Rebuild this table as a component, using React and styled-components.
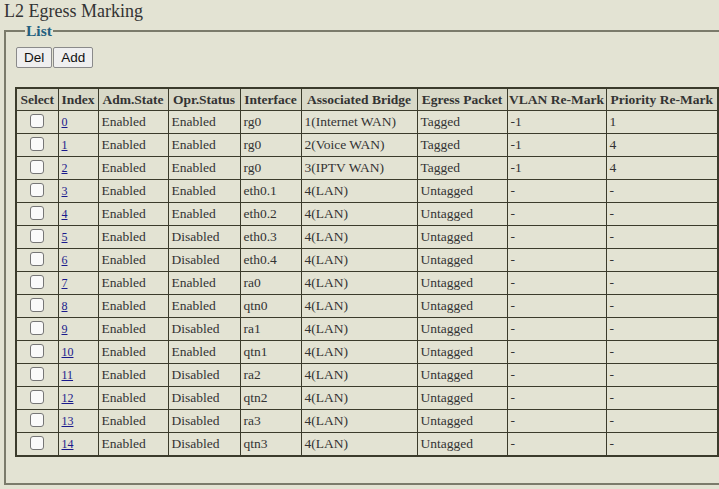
import React from 'react';
import styled, { createGlobalStyle } from 'styled-components';

const GlobalStyle = createGlobalStyle`
  html, body {
    margin: 0;
    padding: 0;
    background: #e3e3d3;
    overflow: hidden;
  }
  body {
    font-family: "Liberation Serif", "Times New Roman", serif;
    color: #333;
  }
`;

// Page wrapper
const Page = styled.div`
  width: 740px;
  padding: 1px 0 0 4px;
`;

const PageTitle = styled.h1`
  margin: 0 0 3px;
  font-size: 18px;
  font-weight: normal;
  line-height: 20px;
  color: #333;
`;

const Box = styled.fieldset`
  margin: 0;
  padding: 9px 0 26px 8px;
  border: 2px solid #7b7b6b;
  border-right: none;
  width: 730px;
  box-sizing: border-box;
`;

const Legend = styled.legend`
  margin-left: 11px;
  padding: 0 1px;
  font-size: 15.5px;
  font-weight: bold;
  color: #23607f;
  line-height: 14px;
`;

const Toolbar = styled.div`
  display: flex;
  gap: 1px;
  margin-left: 2px;
  margin-bottom: 19px;
`;

const Button = styled.button`
  font-family: "Liberation Sans", Arial, sans-serif;
  font-size: 13.5px;
  height: 21px;
  padding: 0 7px;
  background: #efefef;
  color: #111;
  border: 1px solid #8a8a8a;
  border-radius: 2px;
`;

const Table = styled.table`
  border-collapse: collapse;
  table-layout: fixed;
  width: 702px;
  margin-left: 1px;
  border: 2px solid #3b3b2b;
`;

const Th = styled.th`
  background: #d9d9c8;
  border: 1px solid #3b3b2b;
  font-size: 13.5px;
  font-weight: bold;
  color: #333;
  height: 21px;
  padding: 0;
  text-align: center;
  white-space: nowrap;
  overflow: hidden;
`;

const Td = styled.td`
  border: 1px solid #3b3b2b;
  font-size: 13.5px;
  color: #333;
  height: 22px;
  padding: 0 3px;
  text-align: ${(p) => (p.$center ? 'center' : 'left')};
  white-space: nowrap;
  vertical-align: middle;
`;

const Check = styled.span`
  display: inline-block;
  width: 12px;
  height: 12px;
  border: 1px solid #767676;
  border-radius: 3px;
  background: #fafafa;
  vertical-align: middle;
  margin-top: -4px;
`;

const IndexLink = styled.a`
  color: #1a1a8c;
  text-decoration: underline;
  font-size: 12px;
`;

const widths = [42, 40, 70, 72, 61, 116, 90, 99, 112];
const headers = ['Select', 'Index', 'Adm.State', 'Opr.Status', 'Interface', 'Associated Bridge', 'Egress Packet', 'VLAN Re-Mark', 'Priority Re-Mark'];

const rows = [
  ['Enabled', 'Enabled', 'rg0', '1(Internet WAN)', 'Tagged', '-1', '1'],
  ['Enabled', 'Enabled', 'rg0', '2(Voice WAN)', 'Tagged', '-1', '4'],
  ['Enabled', 'Enabled', 'rg0', '3(IPTV WAN)', 'Tagged', '-1', '4'],
  ['Enabled', 'Enabled', 'eth0.1', '4(LAN)', 'Untagged', '-', '-'],
  ['Enabled', 'Enabled', 'eth0.2', '4(LAN)', 'Untagged', '-', '-'],
  ['Enabled', 'Disabled', 'eth0.3', '4(LAN)', 'Untagged', '-', '-'],
  ['Enabled', 'Disabled', 'eth0.4', '4(LAN)', 'Untagged', '-', '-'],
  ['Enabled', 'Enabled', 'ra0', '4(LAN)', 'Untagged', '-', '-'],
  ['Enabled', 'Enabled', 'qtn0', '4(LAN)', 'Untagged', '-', '-'],
  ['Enabled', 'Disabled', 'ra1', '4(LAN)', 'Untagged', '-', '-'],
  ['Enabled', 'Enabled', 'qtn1', '4(LAN)', 'Untagged', '-', '-'],
  ['Enabled', 'Disabled', 'ra2', '4(LAN)', 'Untagged', '-', '-'],
  ['Enabled', 'Disabled', 'qtn2', '4(LAN)', 'Untagged', '-', '-'],
  ['Enabled', 'Disabled', 'ra3', '4(LAN)', 'Untagged', '-', '-'],
  ['Enabled', 'Disabled', 'qtn3', '4(LAN)', 'Untagged', '-', '-'],
];

export default function App() {
  return (
    <Page>
      <GlobalStyle />
      <PageTitle>L2 Egress Marking</PageTitle>
      <Box>
        <Legend>List</Legend>
        <Toolbar>
          <Button>Del</Button>
          <Button>Add</Button>
        </Toolbar>
        <Table>
          <colgroup>
            {widths.map((w, i) => (
              <col key={i} style={{ width: w }} />
            ))}
          </colgroup>
          <thead>
            <tr>
              {headers.map((h) => (
                <Th key={h}>{h}</Th>
              ))}
            </tr>
          </thead>
          <tbody>
            {rows.map((r, i) => (
              <tr key={i}>
                <Td $center>
                  <Check />
                </Td>
                <Td>
                  <IndexLink href="#">{i}</IndexLink>
                </Td>
                {r.map((c, j) => (
                  <Td key={j}>{c}</Td>
                ))}
              </tr>
            ))}
          </tbody>
        </Table>
      </Box>
    </Page>
  );
}
